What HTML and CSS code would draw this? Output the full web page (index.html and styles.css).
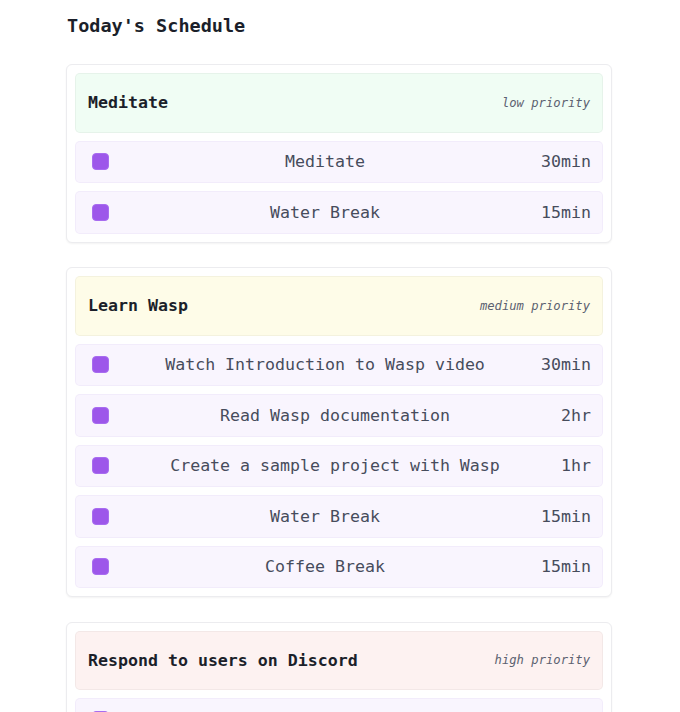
FILE: index.html
```html
<!DOCTYPE html>
<html>
<head>
<meta charset="utf-8">
<link rel="stylesheet" href="styles.css">
</head>
<body>
<div class="page">
  <h1 class="title">Today's Schedule</h1>

  <section class="card">
    <div class="head low"><span class="name">Meditate</span><span class="prio">low priority</span></div>
    <div class="task"><span class="box"></span><span class="label">Meditate</span><span class="dur">30min</span></div>
    <div class="task"><span class="box"></span><span class="label">Water Break</span><span class="dur">15min</span></div>
  </section>

  <section class="card">
    <div class="head medium"><span class="name">Learn Wasp</span><span class="prio">medium priority</span></div>
    <div class="task"><span class="box"></span><span class="label">Watch Introduction to Wasp video</span><span class="dur">30min</span></div>
    <div class="task"><span class="box"></span><span class="label">Read Wasp documentation</span><span class="dur">2hr</span></div>
    <div class="task"><span class="box"></span><span class="label">Create a sample project with Wasp</span><span class="dur">1hr</span></div>
    <div class="task"><span class="box"></span><span class="label">Water Break</span><span class="dur">15min</span></div>
    <div class="task"><span class="box"></span><span class="label">Coffee Break</span><span class="dur">15min</span></div>
  </section>

  <section class="card">
    <div class="head high"><span class="name">Respond to users on Discord</span><span class="prio">high priority</span></div>
    <div class="task"><span class="box"></span><span class="label">Check Discord messages</span><span class="dur">30min</span></div>
    <div class="task"><span class="box"></span><span class="label">Reply to questions</span><span class="dur">1hr</span></div>
  </section>
</div>
</body>
</html>
```

FILE: styles.css
```css
html, body {
  margin: 0;
  padding: 0;
  background: #ffffff;
}

body {
  font-family: "DejaVu Sans Mono", "Liberation Mono", monospace;
  color: #1f2330;
}

.page {
  width: 546px;
  margin-left: 66px;
  padding-top: 11.6px;
  display: flex;
  flex-direction: column;
  gap: 24.5px;
}

.title {
  margin: 0 0 0 1px;
  font-size: 18.5px;
  line-height: 28px;
  font-weight: bold;
  color: #1b1f2a;
}

.card {
  border: 1px solid #ececef;
  border-radius: 6px;
  background: #ffffff;
  box-shadow: 0 1px 2px rgba(0, 0, 0, 0.05);
  padding: 8px;
  display: flex;
  flex-direction: column;
  gap: 8px;
}

.head {
  box-sizing: border-box;
  height: 59.5px;
  display: flex;
  align-items: center;
  justify-content: space-between;
  padding: 0 12px;
  border: 1px solid rgba(0, 0, 0, 0.04);
  border-radius: 5px;
}

.head.low { background: #f0fdf4; }
.head.medium { background: #fefce8; }
.head.high { background: #fdf2f1; }

.name {
  font-size: 16.6px;
  font-weight: bold;
  color: #1b1f2a;
}

.prio {
  font-size: 12.2px;
  font-style: italic;
  color: #5b6170;
}

.task {
  box-sizing: border-box;
  height: 42.5px;
  display: flex;
  align-items: center;
  padding: 0 11px 0 16px;
  background: #f9f5fe;
  border: 1px solid rgba(120, 80, 200, 0.05);
  border-radius: 5px;
}

.box {
  width: 17px;
  height: 17px;
  box-sizing: border-box;
  border-radius: 4px;
  background: #9d57ea;
  border: 1px solid #a86cf0;
  flex: none;
}

.label {
  flex: 1;
  text-align: center;
  font-size: 16.6px;
  color: #474c5c;
}

.dur {
  font-size: 16.6px;
  color: #474c5c;
}
```
